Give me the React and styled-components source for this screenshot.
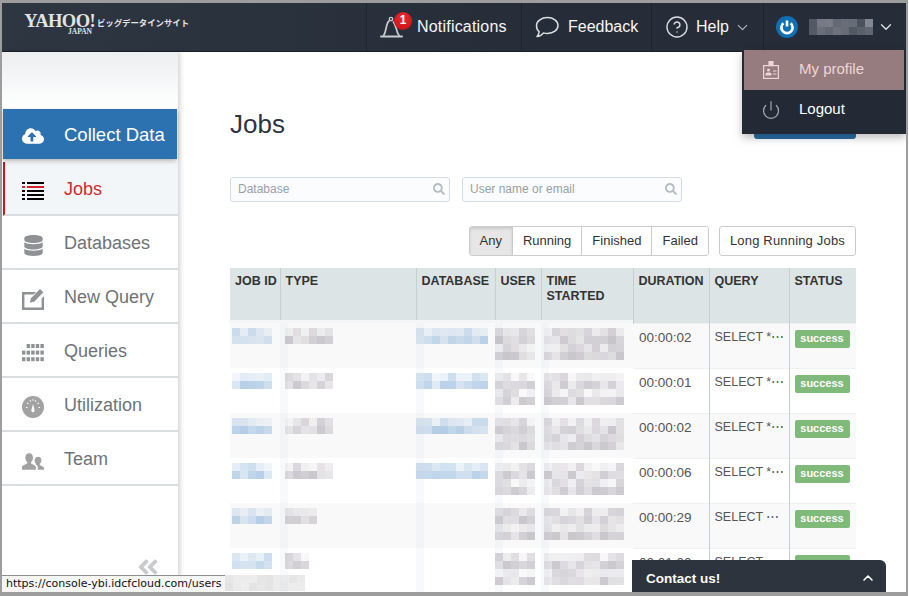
import React from "react";
import styled, { createGlobalStyle } from "styled-components";
import { ChevronDown, ChevronUp, CircleHelp, Power } from "lucide-react";
import { FaAngleDoubleLeft, FaCloudUploadAlt, FaDatabase, FaSearch } from "react-icons/fa";

const GlobalStyle = createGlobalStyle`
  html, body { margin: 0; padding: 0; height: 100%; background: #fff; overflow: hidden; }
  body { font-family: "Liberation Sans", Arial, sans-serif; }
`;

const COLUMNS = [
  { key: "id", label: "JOB ID", width: 50, blur: true },
  { key: "type", label: "TYPE", width: 136, blur: true },
  { key: "db", label: "DATABASE", width: 79, blur: true },
  { key: "user", label: "USER", width: 46, blur: true },
  { key: "time", label: "TIME STARTED", width: 92, blur: true },
  { key: "duration", label: "DURATION", width: 76 },
  { key: "query", label: "QUERY", width: 80 },
  { key: "status", label: "STATUS", width: 67 },
];

const JOBS = [
  { duration: "00:00:02", query: "SELECT *⋯", type: 6, db: 9 },
  { duration: "00:00:01", query: "SELECT *⋯", type: 6, db: 9 },
  { duration: "00:00:02", query: "SELECT *⋯", type: 6, db: 9 },
  { duration: "00:00:06", query: "SELECT *⋯", type: 6, db: 9 },
  { duration: "00:00:29", query: "SELECT ⋯", type: 4, db: 0 },
  { duration: "00:01:00", query: "SELECT ⋯", type: 3, db: 0 },
];

const MENU = [
  { label: "Jobs", icon: <JobsIcon />, active: true },
  { label: "Databases", icon: <FaDatabase size={21} /> },
  { label: "New Query", icon: <EditIcon /> },
  { label: "Queries", icon: <GridIcon /> },
  { label: "Utilization", icon: <GaugeIcon /> },
  { label: "Team", icon: <TeamIcon /> },
];

// 個人情報はモザイクで隠されているのでブロックで再現
function shade(seed, i, cols, tone) {
  const n = Math.abs(Math.sin(seed * 12.9898 + i * 78.233) * 43758.5453) % 1;
  const strong = Math.floor(i / cols) % 2 === 1;
  if (tone === "blue") {
    const a = (strong ? 0.3 : 0.1) + n * 0.4;
    return `rgba(150, 185, 220, ${a.toFixed(2)})`;
  }
  if (tone === "pale") {
    return `rgba(200, 200, 200, ${(0.3 + n * 0.2).toFixed(2)})`;
  }
  if (tone === "dark") {
    return `rgba(170, 172, 180, ${(0.35 + n * 0.5).toFixed(2)})`;
  }
  const a = (strong ? 0.2 : 0.06) + n * 0.4;
  return `rgba(165, 160, 170, ${a.toFixed(2)})`;
}

function Mosaic({ cols, rows, tone, seed }) {
  const blocks = [];
  for (let i = 0; i < cols * rows; i++) {
    blocks.push(<MosaicBlock key={i} style={{ background: shade(seed, i, cols, tone) }} />);
  }
  return <MosaicGrid $cols={cols}>{blocks}</MosaicGrid>;
}

function JobsIcon() {
  return (
    <svg width="22" height="18" viewBox="0 0 22 18">
      {[0, 4, 8, 12, 16].map((y, i) => (
        <g key={y} fill={i === 1 ? "#d2232a" : "#000"}>
          <rect x="0" y={y} width="3" height="2" />
          <rect x="5" y={y} width="17" height="2" />
        </g>
      ))}
    </svg>
  );
}

function EditIcon() {
  return (
    <svg width="22" height="21" viewBox="0 0 22 21" fill="#8f9295">
      <path d="M0 3h14l-2.400 2.400H2.400v13.200h17.200V9.600L22 7.200V21H0z" />
      <path d="M18 0l3.400 3.200-9 9.200-4.600 1.400 1.200-4.600z" />
    </svg>
  );
}

function GridIcon() {
  const cells = [];
  for (let r = 0; r < 3; r++) {
    for (let c = 0; c < 5; c++) {
      if (r === 0 && c === 0) continue;
      cells.push(<rect key={`${r}-${c}`} x={c * 4.6} y={r * 6.6} width="3.4" height="4" />);
    }
  }
  return (
    <svg width="22" height="18" viewBox="0 0 22 18" fill="#8f9295">
      {cells}
    </svg>
  );
}

function GaugeIcon() {
  return (
    <svg width="22" height="22" viewBox="0 0 22 22">
      <circle cx="11" cy="11" r="11" fill="#a2a2a2" />
      <path d="M11 8l1.600 6a1.700 1.700 0 1 1-3.200 0z" fill="#fff" />
      <path
        d="M4 11.500h1.500M5.200 7l1.300.8M8 4.200l.7 1.300M11 3.200v1.500M14 4.200l-.7 1.300M16.800 7l-1.300.8M18 11.500h-1.500"
        stroke="#fff"
        strokeWidth="1.1"
      />
    </svg>
  );
}

function TeamIcon() {
  return (
    <svg width="23" height="17" viewBox="0 0 23 17" fill="#a2a2a2">
      <path d="M7.500 0c2.600 0 4 2 4 4.600 0 2-.8 3.600-2 4.400v1.600l4 2.200c.7.4 1 1 1 1.800V17H0v-2.400c0-.8.3-1.400 1-1.800l4.500-2.200V9C4.300 8.200 3.500 6.600 3.500 4.600 3.500 2 4.900 0 7.500 0z" />
      <path d="M17 3.500c2.200 0 3.300 1.700 3.300 3.800 0 1.600-.6 2.900-1.600 3.600v1.300l3.300 1.700c.6.300 1 .8 1 1.500V17h-6.500v-2.400c0-1.100-.5-1.900-1.400-2.400l-.6-.3v-1c-.9-.7-1.400-2-1.400-3.600 0-2.100 1.700-3.800 3.900-3.800z" />
    </svg>
  );
}

function BellIcon() {
  return (
    <svg width="23" height="22" viewBox="0 0 23 22" fill="none" stroke="#c9cbce" strokeWidth="1.7">
      <path d="M1 20.500h21" strokeLinecap="round" strokeWidth="2" />
      <path d="M3.500 20c2-3.500 2.500-7 3.200-10.500C7.200 7 8 5.500 9.500 4.500" />
      <path d="M13 5.500c2 2 2.500 4.500 3.500 8 .6 2.500 1.500 5 3 6.500" />
      <circle cx="11" cy="3" r="1.700" strokeWidth="1.300" />
    </svg>
  );
}

function BubbleIcon() {
  return (
    <svg width="24" height="23" viewBox="0 0 24 23" fill="none" stroke="#dcdde0" strokeWidth="1.5">
      <path
        d="M12.500 1.500c5.800 0 10.500 3.500 10.500 8s-4.700 8-10.500 8c-1.500 0-2.800-.2-4-.6C7 18.800 4.500 20.600 2 20.600c1.200-1.300 2-3 2.100-4.900C2.200 14.200 1.500 12 1.500 9.500c0-4.500 5.200-8 11-8z"
        strokeLinejoin="round"
      />
    </svg>
  );
}

function BadgeIcon() {
  return (
    <svg width="16" height="18" viewBox="0 0 16 18" fill="none" stroke="#eed5d7" strokeWidth="1.2">
      <rect x="0.600" y="4.600" width="14.800" height="12.800" />
      <rect x="6" y="0.600" width="4" height="4" fill="#eed5d7" />
      <circle cx="5.500" cy="9" r="1.500" fill="#eed5d7" stroke="none" />
      <path d="M2.500 14.500h6v-1.500c0-1-1.300-1.500-3-1.500s-3 .5-3 1.500z" fill="#eed5d7" stroke="none" />
      <path d="M10 10h3.500M10 13h3.500" />
    </svg>
  );
}

function AvatarIcon() {
  return (
    <svg width="22" height="22" viewBox="0 0 22 22">
      <circle cx="11" cy="11" r="11" fill="#0f6fb2" />
      <path d="M7.400 7.300a5.600 5.600 0 1 0 7.200 0" fill="none" stroke="#fff" strokeWidth="2.700" />
      <path d="M11 4.500v6" stroke="#fff" strokeWidth="2.600" />
    </svg>
  );
}

export default function App() {
  return (
    <Page>
      <GlobalStyle />
      <Header>
        <Logo>
          <Wordmark>
            <YahooText>YAHOO!</YahooText>
            <JapanText>JAPAN</JapanText>
          </Wordmark>
          <ProductName>ビッグデータインサイト</ProductName>
        </Logo>
        <HeaderNav>
          <NavItem $width={155}>
            <BellWrap>
              <BellIcon />
              <Badge>1</Badge>
            </BellWrap>
            <NotifyLabel>Notifications</NotifyLabel>
          </NavItem>
          <NavItem $width={130}>
            <BubbleIcon />
            Feedback
          </NavItem>
          <NavItem $width={112} $gap={7}>
            <CircleHelp size={24} strokeWidth={1.4} color="#dcdde0" />
            Help
            <HelpChevron>
              <ChevronDown size={17} strokeWidth={1.5} color="#b9bcc1" />
            </HelpChevron>
          </NavItem>
          <UserItem>
            <AvatarIcon />
            <UserMosaic>
              <Mosaic cols={8} rows={2} tone="dark" seed={91} />
            </UserMosaic>
            <ChevronDown size={18} strokeWidth={1.6} color="#e4e5e7" />
          </UserItem>
        </HeaderNav>
      </Header>

      <Body>
        <Sidebar>
          <SidebarTop />
          <CollectButton>
            <IconSlot>
              <FaCloudUploadAlt size={24} />
            </IconSlot>
            Collect Data
          </CollectButton>
          <SideMenu>
            {MENU.map((item) => (
              <SideItem key={item.label} $active={item.active}>
                <IconSlot>{item.icon}</IconSlot>
                {item.label}
              </SideItem>
            ))}
          </SideMenu>
          <Collapse>
            <FaAngleDoubleLeft size={24} />
          </Collapse>
        </Sidebar>

        <Main>
          <TitleRow>
            <Title>Jobs</Title>
            <PrimaryButton />
          </TitleRow>

          <Filters>
            <SearchBox>
              <SearchInput placeholder="Database" />
              <SearchGlyph>
                <FaSearch size={12} />
              </SearchGlyph>
            </SearchBox>
            <SearchBox>
              <SearchInput placeholder="User name or email" />
              <SearchGlyph>
                <FaSearch size={12} />
              </SearchGlyph>
            </SearchBox>
          </Filters>

          <ButtonRow>
            <ButtonGroup>
              <GroupButton $active>Any</GroupButton>
              <GroupButton>Running</GroupButton>
              <GroupButton>Finished</GroupButton>
              <GroupButton>Failed</GroupButton>
            </ButtonGroup>
            <SingleButton>Long Running Jobs</SingleButton>
          </ButtonRow>

          <JobsTable>
            <colgroup>
              {COLUMNS.map((c) => (
                <col key={c.key} style={{ width: c.width }} />
              ))}
            </colgroup>
            <thead>
              <tr>
                {COLUMNS.map((c) => (
                  <Th key={c.key} $blur={c.blur}>
                    {c.label}
                  </Th>
                ))}
              </tr>
            </thead>
            <tbody>
              {JOBS.map((job, i) => (
                <Row key={i} $odd={i % 2 === 0}>
                  <BlurCell $pad={2} $first>
                    <Mosaic cols={5} rows={2} tone="blue" seed={i + 1} />
                  </BlurCell>
                  <BlurCell $pad={5}>
                    <Mosaic cols={job.type} rows={2} tone="gray" seed={i + 11} />
                  </BlurCell>
                  <BlurCell $pad={0}>
                    {job.db > 0 && <Mosaic cols={job.db} rows={2} tone="blue" seed={i + 21} />}
                  </BlurCell>
                  <BlurCell $pad={0}>
                    <Mosaic cols={5} rows={4} tone="gray" seed={i + 31} />
                  </BlurCell>
                  <BlurCell $pad={3}>
                    <Mosaic cols={10} rows={4} tone="gray" seed={i + 41} />
                  </BlurCell>
                  <DurationCell>{job.duration}</DurationCell>
                  <TextCell>{job.query}</TextCell>
                  <TextCell>
                    <StatusLabel>success</StatusLabel>
                  </TextCell>
                </Row>
              ))}
            </tbody>
          </JobsTable>
        </Main>
      </Body>

      <Dropdown>
        <DropdownItem $hover>
          <DropIcon>
            <BadgeIcon />
          </DropIcon>
          My profile
        </DropdownItem>
        <DropdownItem>
          <DropIcon>
            <Power size={20} strokeWidth={1.5} color="#a3a6aa" />
          </DropIcon>
          Logout
        </DropdownItem>
      </Dropdown>

      <StatusBar>
        <StatusUrl>https://console-ybi.idcfcloud.com/users</StatusUrl>
        <Mosaic cols={10} rows={2} tone="pale" seed={77} />
      </StatusBar>

      <ContactBar>
        Contact us!
        <ChevronUp size={16} strokeWidth={2.4} />
      </ContactBar>
    </Page>
  );
}

/* ---- page ---- */
const Page = styled.div`
  position: relative;
  width: 904px;
  height: 589px;
  border: solid #9d9d9d;
  border-width: 3px 2px 4px 2px;
  display: flex;
  flex-direction: column;
  overflow: hidden;
  background: #fff;
`;

const Body = styled.div`
  flex: 1;
  display: flex;
  min-height: 0;
`;

/* ---- header ---- */
const Header = styled.header`
  flex: none;
  height: 49px;
  display: flex;
  justify-content: space-between;
  background: linear-gradient(90deg, #2d3641, #262d39 60%);
  border-bottom: 1px solid #1b2029;
  box-sizing: border-box;
  color: #fff;
`;

const Logo = styled.div`
  display: flex;
  align-items: flex-start;
  padding: 11px 0 0 22px;
  gap: 2px;
`;

const Wordmark = styled.div`
  display: flex;
  flex-direction: column;
  align-items: flex-end;
  width: 71px;
  color: #e2e3e4;
  font-family: "Liberation Serif", serif;
`;

const YahooText = styled.span`
  font-size: 18.5px;
  line-height: 14px;
  font-weight: 700;
  letter-spacing: -0.6px;
`;

const JapanText = styled.span`
  font-size: 7.5px;
  line-height: 7px;
  font-weight: 700;
  margin-right: 3px;
`;

const ProductName = styled.span`
  font-family: "Noto Sans CJK JP", sans-serif;
  font-size: 8.4px;
  line-height: 16px;
  font-weight: 700;
  color: #e4e5e7;
`;

const HeaderNav = styled.nav`
  display: flex;
`;

const NavItem = styled.div`
  width: ${(p) => p.$width}px;
  box-sizing: border-box;
  padding-left: 13px;
  display: flex;
  align-items: center;
  gap: ${(p) => p.$gap ?? 9}px;
  border-left: 1px solid #1f2530;
  font-size: 16px;
  color: #f6f6f7;
`;

const NotifyLabel = styled.span`
  margin-left: 5px;
  letter-spacing: 0.2px;
`;

const HelpChevron = styled.span`
  display: flex;
  margin-left: -2px;
`;

const UserItem = styled(NavItem)`
  width: 143px;
  padding-left: 12px;
  gap: 11px;

  svg {
    flex: none;
  }
`;

const UserMosaic = styled.div`
  opacity: 0.85;
  margin-right: -7px;
`;

const BellWrap = styled.span`
  position: relative;
  display: flex;
`;

const Badge = styled.span`
  position: absolute;
  top: -4px;
  left: 14px;
  width: 18px;
  height: 18px;
  border-radius: 50%;
  background: radial-gradient(circle at 50% 30%, #ee2a2e, #c30d14);
  font-size: 12px;
  font-weight: 700;
  line-height: 16px;
  text-align: center;
  color: #fff;
`;

/* ---- sidebar ---- */
const Sidebar = styled.aside`
  position: relative;
  flex: none;
  width: 176px;
  display: flex;
  flex-direction: column;
  background: #fff;
  box-shadow: 2px 0 5px rgba(0, 0, 0, 0.18);
`;

const SidebarTop = styled.div`
  height: 57px;
  background: linear-gradient(#eceef0, #fff);
`;

const IconSlot = styled.span`
  width: 22px;
  flex: none;
  display: flex;
  justify-content: center;
  margin: 3px 20px 0 0;
`;

const CollectButton = styled.div`
  position: relative;
  height: 50px;
  margin: 0 1px;
  display: flex;
  align-items: center;
  padding: 1px 0 0 19px;
  box-sizing: border-box;
  background: #2c72b0;
  box-shadow: 0 2px 4px rgba(0, 0, 0, 0.3);
  color: #fff;
  font-size: 18.5px;
`;

const SideMenu = styled.div`
  margin-top: 3px;
  display: flex;
  flex-direction: column;
`;

const SideItem = styled.div`
  height: 54px;
  box-sizing: border-box;
  display: flex;
  align-items: center;
  padding: 3px 0 0 ${(p) => (p.$active ? 17 : 20)}px;
  font-size: 18px;
  color: ${(p) => (p.$active ? "#cf2a2f" : "#6e7378")};
  background: ${(p) => (p.$active ? "#f3f6f8" : "#fff")};
  border-bottom: 2px solid #d8dee0;
  border-left: ${(p) => (p.$active ? "2px solid #c8141c" : "none")};
  margin-left: ${(p) => (p.$active ? "1px" : "0")};

  svg {
    color: #8f9295;
  }
`;

const Collapse = styled.div`
  position: absolute;
  right: 18px;
  bottom: 13px;
  color: #c9cacc;
  display: flex;
`;

/* ---- main ---- */
const Main = styled.main`
  flex: 1;
  padding: 0 50px 0 52px;
  min-width: 0;
`;

const TitleRow = styled.div`
  display: flex;
  justify-content: space-between;
  height: 88px;
  box-sizing: border-box;
  padding-top: 55px;
`;

const Title = styled.h1`
  margin: 0;
  font-size: 26px;
  line-height: 34px;
  font-weight: 400;
  color: #2b3440;
`;

const PrimaryButton = styled.div`
  width: 102px;
  height: 30px;
  margin-top: 2px;
  border-radius: 3px;
  background: #2a6ea8;
`;

const Filters = styled.div`
  display: flex;
  gap: 12px;
  margin-top: 37px;
`;

const SearchBox = styled.div`
  position: relative;
  width: 220px;
  height: 25px;
`;

const SearchInput = styled.input`
  width: 100%;
  height: 100%;
  box-sizing: border-box;
  padding: 0 24px 2px 7px;
  border: 1px solid #d3dde6;
  border-radius: 3px;
  background: #fbfcfd;
  font-family: inherit;
  font-size: 12px;
  outline: none;

  &::placeholder {
    color: #9a9fa6;
    opacity: 1;
  }
`;

const SearchGlyph = styled.span`
  position: absolute;
  right: 5px;
  top: 6px;
  display: flex;
  color: #b3bfc8;
`;

const ButtonRow = styled.div`
  display: flex;
  justify-content: flex-end;
  gap: 10px;
  margin-top: 24px;
`;

const ButtonGroup = styled.div`
  display: flex;
  height: 30px;
  border: 1px solid #ccc;
  border-radius: 3px;
  box-sizing: border-box;
  overflow: hidden;
`;

const GroupButton = styled.div`
  padding: 0 10px 2px;
  display: flex;
  align-items: center;
  font-size: 13px;
  color: #333;
  background: ${(p) => (p.$active ? "#e6e6e6" : "#fff")};
  box-shadow: ${(p) => (p.$active ? "inset 0 2px 3px rgba(0,0,0,.12)" : "none")};
  & + & {
    border-left: 1px solid #ccc;
  }
`;

const SingleButton = styled.div`
  height: 30px;
  box-sizing: border-box;
  padding: 0 10px 2px;
  display: flex;
  align-items: center;
  border: 1px solid #ccc;
  border-radius: 3px;
  font-size: 13px;
  letter-spacing: 0.18px;
  color: #333;
`;

/* ---- table ---- */
const JobsTable = styled.table`
  margin-top: 12px;
  width: 626px;
  table-layout: fixed;
  border-collapse: collapse;
`;

const Th = styled.th`
  position: relative;
  height: 55px;
  box-sizing: border-box;
  padding: 6px 0 0 5px;
  vertical-align: top;
  text-align: left;
  font-size: 12.5px;
  line-height: 15px;
  font-weight: 700;
  color: #333;
  background: #dce4e6;
  border-left: 1px solid #c5cfd2;

  &:first-child {
    border-left: none;
  }

  &::after {
    content: "";
    display: ${(p) => (p.$blur ? "block" : "none")};
    position: absolute;
    left: -1px;
    right: 0;
    bottom: 0;
    height: 3px;
    background: #f3f5f6;
  }
`;

const Row = styled.tr`
  height: 45px;
  background: ${(p) => (p.$odd ? "#f9f9f9" : "#fff")};
`;

const TextCell = styled.td`
  padding: 6px 5px 0;
  vertical-align: top;
  font-size: 12.5px;
  line-height: 15px;
  color: #555;
  border-left: 1px solid #c5cfd2;
  border-top: 1px solid #eef1f2;
  white-space: nowrap;
  overflow: hidden;
`;

const DurationCell = styled(TextCell)`
  padding-left: 6px;
  font-size: 13.5px;
  border-left: none;
`;

const BlurCell = styled.td`
  padding: 5px 0 0 ${(p) => p.$pad}px;
  vertical-align: top;
  box-shadow: ${(p) => (p.$first ? "none" : "inset 8px 0 0 rgba(225, 232, 238, 0.25)")};
`;

const MosaicGrid = styled.div`
  display: grid;
  grid-template-columns: repeat(${(p) => p.$cols}, 8px);
  grid-auto-rows: 8px;
`;

const MosaicBlock = styled.span`
  display: block;
`;

const StatusLabel = styled.span`
  display: inline-block;
  width: 55px;
  height: 18px;
  border-radius: 2px;
  background: #7fba7a;
  color: #fff;
  font-size: 11px;
  font-weight: 700;
  line-height: 17px;
  text-align: center;
`;

/* ---- overlays ---- */
const Dropdown = styled.div`
  position: absolute;
  top: 47px;
  right: 0;
  width: 160px;
  padding-bottom: 2px;
  border: 2px solid #232a36;
  border-top: none;
  background: #232a36;
  box-shadow: 0 4px 8px rgba(0, 0, 0, 0.25);
`;

const DropdownItem = styled.div`
  height: 40px;
  box-sizing: border-box;
  padding-bottom: 4px;
  display: flex;
  align-items: center;
  font-size: 15px;
  color: ${(p) => (p.$hover ? "#eed5d7" : "#fff")};
  background: ${(p) => (p.$hover ? "#967b7f" : "transparent")};
`;

const DropIcon = styled.span`
  width: 55px;
  display: flex;
  justify-content: center;
  padding: 4px 2px 0 0;
  box-sizing: border-box;
`;

const StatusBar = styled.div`
  position: absolute;
  left: 0;
  bottom: 0;
  display: flex;
`;

const StatusUrl = styled.div`
  height: 16px;
  padding: 0 4px 0 4px;
  border: solid #8f8f8f;
  border-width: 1px 0 0 0;
  background: #f6f6f6;
  font-family: "DejaVu Sans", sans-serif;
  font-size: 11px;
  line-height: 16px;
  color: #111;
`;

const ContactBar = styled.div`
  position: absolute;
  left: 630px;
  bottom: -4px;
  width: 254px;
  height: 36px;
  box-sizing: border-box;
  padding: 0 10px 0 14px;
  display: flex;
  align-items: center;
  justify-content: space-between;
  border-radius: 0 6px 0 0;
  background: #2e343d;
  color: #fff;
  font-size: 13.5px;
  font-weight: 700;
`;
